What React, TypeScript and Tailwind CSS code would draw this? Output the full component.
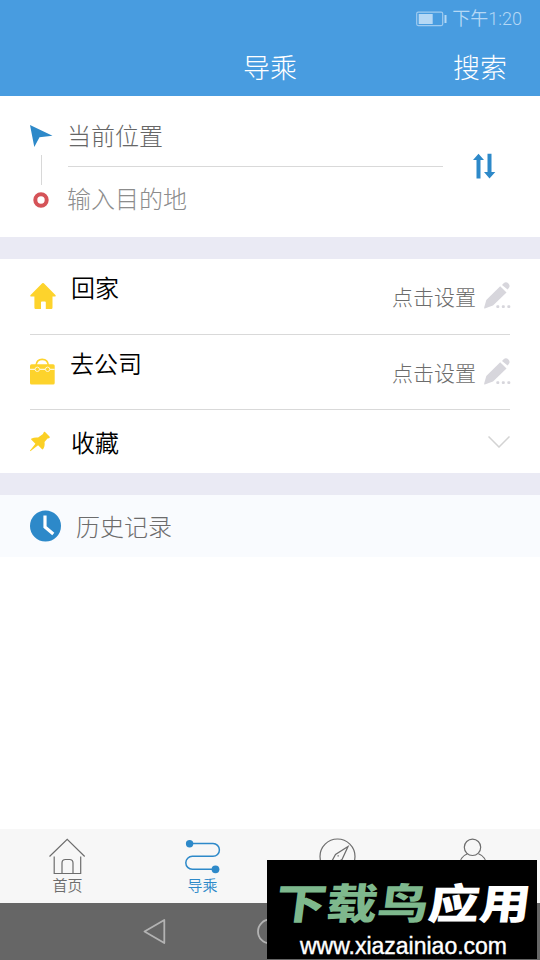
import type { ReactNode } from 'react'

function BatteryIcon() {
  return (
    <svg width="32" height="16" viewBox="0 0 32 16" fill="none">
      <rect x="0.7" y="1.2" width="26" height="13.4" rx="1.5" stroke="#9fcbf0" strokeWidth="1.2" />
      <rect x="2.7" y="3" width="14" height="10" fill="#b5d8f5" />
      <path d="M29.5 4v8" stroke="#b5d8f5" strokeWidth="2" />
    </svg>
  )
}

function HouseIcon() {
  return (
    <svg width="28" height="28" viewBox="0 0 28 28" fill="#fdd32c">
      <path d="M12.2 1.3a1.200 1.200 0 0 1 1.600 0l11.600 11.600c.6.700.4 1.600-.6 1.600h-2.300v10.900c0 1-.6 1.600-1.600 1.600h-5.100v-6.700c0-.6-.3-.9-.9-.9h-3c-.6 0-.9.300-.9.900V27H6c-1 0-1.600-.6-1.600-1.600V14.500H1.200c-1 0-1.200-.9-.6-1.600z" />
    </svg>
  )
}

function BriefcaseIcon() {
  return (
    <svg width="28" height="28" viewBox="0 0 28 28" fill="none">
      <path d="M6 7.500C6.400 3.400 9 1.300 12.200 1.300s5.800 2.100 6.200 6.200" stroke="#fdd32c" strokeWidth="1.700" />
      <rect x="0" y="6.200" width="24.700" height="20.300" rx="1.600" fill="#fdd32c" />
      <path d="M0 11.300h5M9.600 11.300h5.800M20 11.300h4.700" stroke="#fff7d6" strokeWidth="1.200" />
      <circle cx="7.300" cy="11.300" r="2.200" fill="#fdd32c" stroke="#fff7d6" strokeWidth="1" />
      <circle cx="17.600" cy="11.300" r="2.200" fill="#fdd32c" stroke="#fff7d6" strokeWidth="1" />
    </svg>
  )
}

function PinIcon() {
  return (
    <svg width="28" height="22" viewBox="0 0 28 22" fill="#fbd025">
      <path d="M13.600 1.400c.5-.8 1.100-.8 1.700-.2l4.200 4.400c.6.700.3 1.400-.5 1.600l-1.500.3-3 3.600c.4 2.600 0 4.900-1.300 6.900-.4.600-.9.500-1.400 0l-3.700-3.800L.7 20c-.5.400-.9 0-.6-.6l5.300-6.700-4-3.900c-.4-.5-.4-.9.200-1.300 1.900-1 4.100-1.300 6.500-1L13 3.100z" />
    </svg>
  )
}

function PencilIcon() {
  return (
    <svg width="28" height="28" viewBox="0 0 28 28" fill="#d7d6dc">
      <path d="M16.200 4.300l6.300 6.100L9 23.600.8 26.400c-.6.100-.8-.1-.7-.7L2.300 18z" />
      <path d="M18 3l1.900-1.900c1.400-1.200 3.100-1 4.500.4s1.600 3.100.4 4.500L23.600 7.600z" />
      <rect x="12.300" y="23.300" width="3" height="2.600" rx="1" />
      <rect x="17.800" y="23.300" width="3" height="2.600" rx="1" />
      <rect x="23.300" y="23.300" width="3" height="2.600" rx="1" />
    </svg>
  )
}

function Tab({ label, active, children }: { label: string; active?: boolean; children: ReactNode }) {
  return (
    <div className={`flex flex-col items-center pt-2 ${active ? 'text-[#2d89c9]' : 'text-[#6d6d6d]'}`}>
      <svg width="41" height="38" viewBox="0 0 41 38" fill="none" stroke="currentColor" strokeWidth="1.2">
        {children}
      </svg>
      <span className="text-[15px] leading-[20px]">{label}</span>
    </div>
  )
}

function PlaceRow({ icon, label, nudge }: { icon: ReactNode; label: string; nudge: string }) {
  return (
    <div className="mx-[30px] flex h-[75.5px] border-b border-[#d9d9d9]">
      <div className="w-7 pt-[23px]">{icon}</div>
      <span className={`pt-[10px] text-[24px] leading-9 text-black ${nudge}`}>{label}</span>
      <span className="ml-auto pt-[21px] text-[21px] leading-8 font-light text-[#6c6c6c]">点击设置</span>
      <div className="ml-[8px] w-[26px] pt-[23px]">
        <PencilIcon />
      </div>
    </div>
  )
}

export default function App() {
  return (
    <div className="relative flex h-[960px] w-[540px] flex-col overflow-hidden bg-white font-['Noto_Sans_CJK_SC',sans-serif] font-[350]">
      <header className="h-24 bg-[#489ce0]">
        <div className="flex h-[37px] items-center justify-end gap-1 pr-[18px] text-[#b5d8f5]">
          <BatteryIcon />
          <span className="font-[Roboto,'Noto_Sans_CJK_SC',sans-serif] text-[18px] leading-[38px]">下午1:20</span>
        </div>
        <div className="grid h-[59px] grid-cols-3 items-center text-[27px] leading-[60px] font-light text-white">
          <span className="col-start-2 text-center">导乘</span>
          <span className="pr-[33px] text-right">搜索</span>
        </div>
      </header>

      <section className="flex h-[141px] pl-[30px]">
        <svg width="38" height="141" viewBox="0 0 38 141" fill="none">
          <path d="M0 29l22.500 10.800-13 1.500L4.300 51z" fill="#2d89c9" />
          <path d="M11.500 59v30" stroke="#d8d8d8" />
          <circle cx="11" cy="104" r="5.700" stroke="#d55358" strokeWidth="4" />
        </svg>
        <div className="w-[375px] pt-[9px] text-[24px] font-light">
          <div className="h-[62px] border-b border-[#d9d9d9] leading-[60px] text-[#666]">
            <span className="-ml-px">当前位置</span>
          </div>
          <div className="leading-[62px] text-[#8c8c8c]">
            <span className="-ml-px">输入目的地</span>
          </div>
        </div>
        <svg className="ml-[30px] mt-[57px]" width="23" height="27" viewBox="0 0 23 27" fill="#2d89c9">
          <path d="M5.500.8l5.500 6.200H7.500v18.500h-4V7H0z" />
          <path d="M14.500.800h4V19h3.800L16.500 25.500 11 19h3.500z" />
        </svg>
      </section>

      <div className="h-[22px] bg-[#eaeaf4]" />

      <section className="h-[214px]">
        <PlaceRow icon={<HouseIcon />} label="回家" nudge="pl-[13px]" />
        <PlaceRow icon={<BriefcaseIcon />} label="去公司" nudge="pl-[12px]" />
        <div className="mx-[30px] flex h-[63px] items-center">
          <PinIcon />
          <span className="pl-[13px] text-[24px] leading-9 text-black">收藏</span>
          <svg className="ml-auto" width="22" height="12" viewBox="0 0 22 12" fill="none" stroke="#d3d3d3" strokeWidth="1.500">
            <path d="M.5.500L11 11 21.500.500" />
          </svg>
        </div>
      </section>

      <div className="h-[22px] bg-[#eaeaf4]" />

      <div className="flex h-[62px] items-center bg-[#f9fbfe] pl-[30px] text-[24px] font-light text-[#6c6c6c]">
        <svg width="31" height="32" viewBox="0 0 31 32" fill="none">
          <circle cx="15.500" cy="16" r="15.500" fill="#2d89c9" />
          <path d="M15 5.500v11.500l8.300 7" stroke="white" strokeWidth="3.200" />
        </svg>
        <span className="pl-[15px] leading-[62px]">历史记录</span>
      </div>

      <div className="flex-1" />

      <nav className="grid h-[74px] grid-cols-4 bg-[#f7f7f7]">
        <Tab label="首页">
          <path d="M2.500 19.500L20.200 2.300l17.500 17.200M7.200 19.500v17h26.500v-17M15 36.500V26q0-3.500 3.500-3.500h4q3.500 0 3.500 3.500v10.500" />
        </Tab>
        <Tab label="导乘" active>
          <path d="M7.500 6.500H31a6.400 6.400 0 0 1 0 12.800H10.300a6.500 6.500 0 0 0 0 13H33" strokeWidth="1.500" />
          <circle cx="7.600" cy="6.700" r="3.700" fill="currentColor" stroke="none" />
          <circle cx="33.500" cy="32.300" r="3.900" fill="currentColor" stroke="none" />
        </Tab>
        <Tab label="发现">
          <circle cx="20.500" cy="19.500" r="17.500" />
          <path d="M31 9.500L18.500 17.500l-7 13L25 22.500zM20.500 18.800h1.300" />
        </Tab>
        <Tab label="我的">
          <circle cx="20.500" cy="10.300" r="8.200" />
          <path d="M15.500 16.800Q7.500 20 7.500 29v7h27v-7q0-9-8-12.200" />
        </Tab>
      </nav>

      <div className="flex h-[57px] items-center bg-[#666] pl-[142px]">
        <svg width="150" height="30" viewBox="0 0 150 30" fill="none" stroke="#b3b3b3" strokeWidth="1.800">
          <path d="M22.300 3v23L2.500 14.500z" strokeLinejoin="round" />
          <circle cx="128" cy="14.500" r="12" />
        </svg>
      </div>

      {/* site badge */}
      <div className="absolute left-[267px] top-[860px] h-[99px] w-[270px] overflow-hidden bg-black text-white">
        <div className="mt-[10px] ml-[3px] origin-center -skew-x-6 scale-y-[0.82] whitespace-nowrap text-center text-[51px] leading-[62px] font-black">
          <span className="text-[#7eb88d]">下载鸟</span>应用
        </div>
        <div className="pl-[3px] text-center font-['Liberation_Sans',sans-serif] text-[23px] leading-[28px] font-normal [-webkit-text-stroke:0.4px_white]">
          www.xiazainiao.com
        </div>
      </div>
    </div>
  )
}
